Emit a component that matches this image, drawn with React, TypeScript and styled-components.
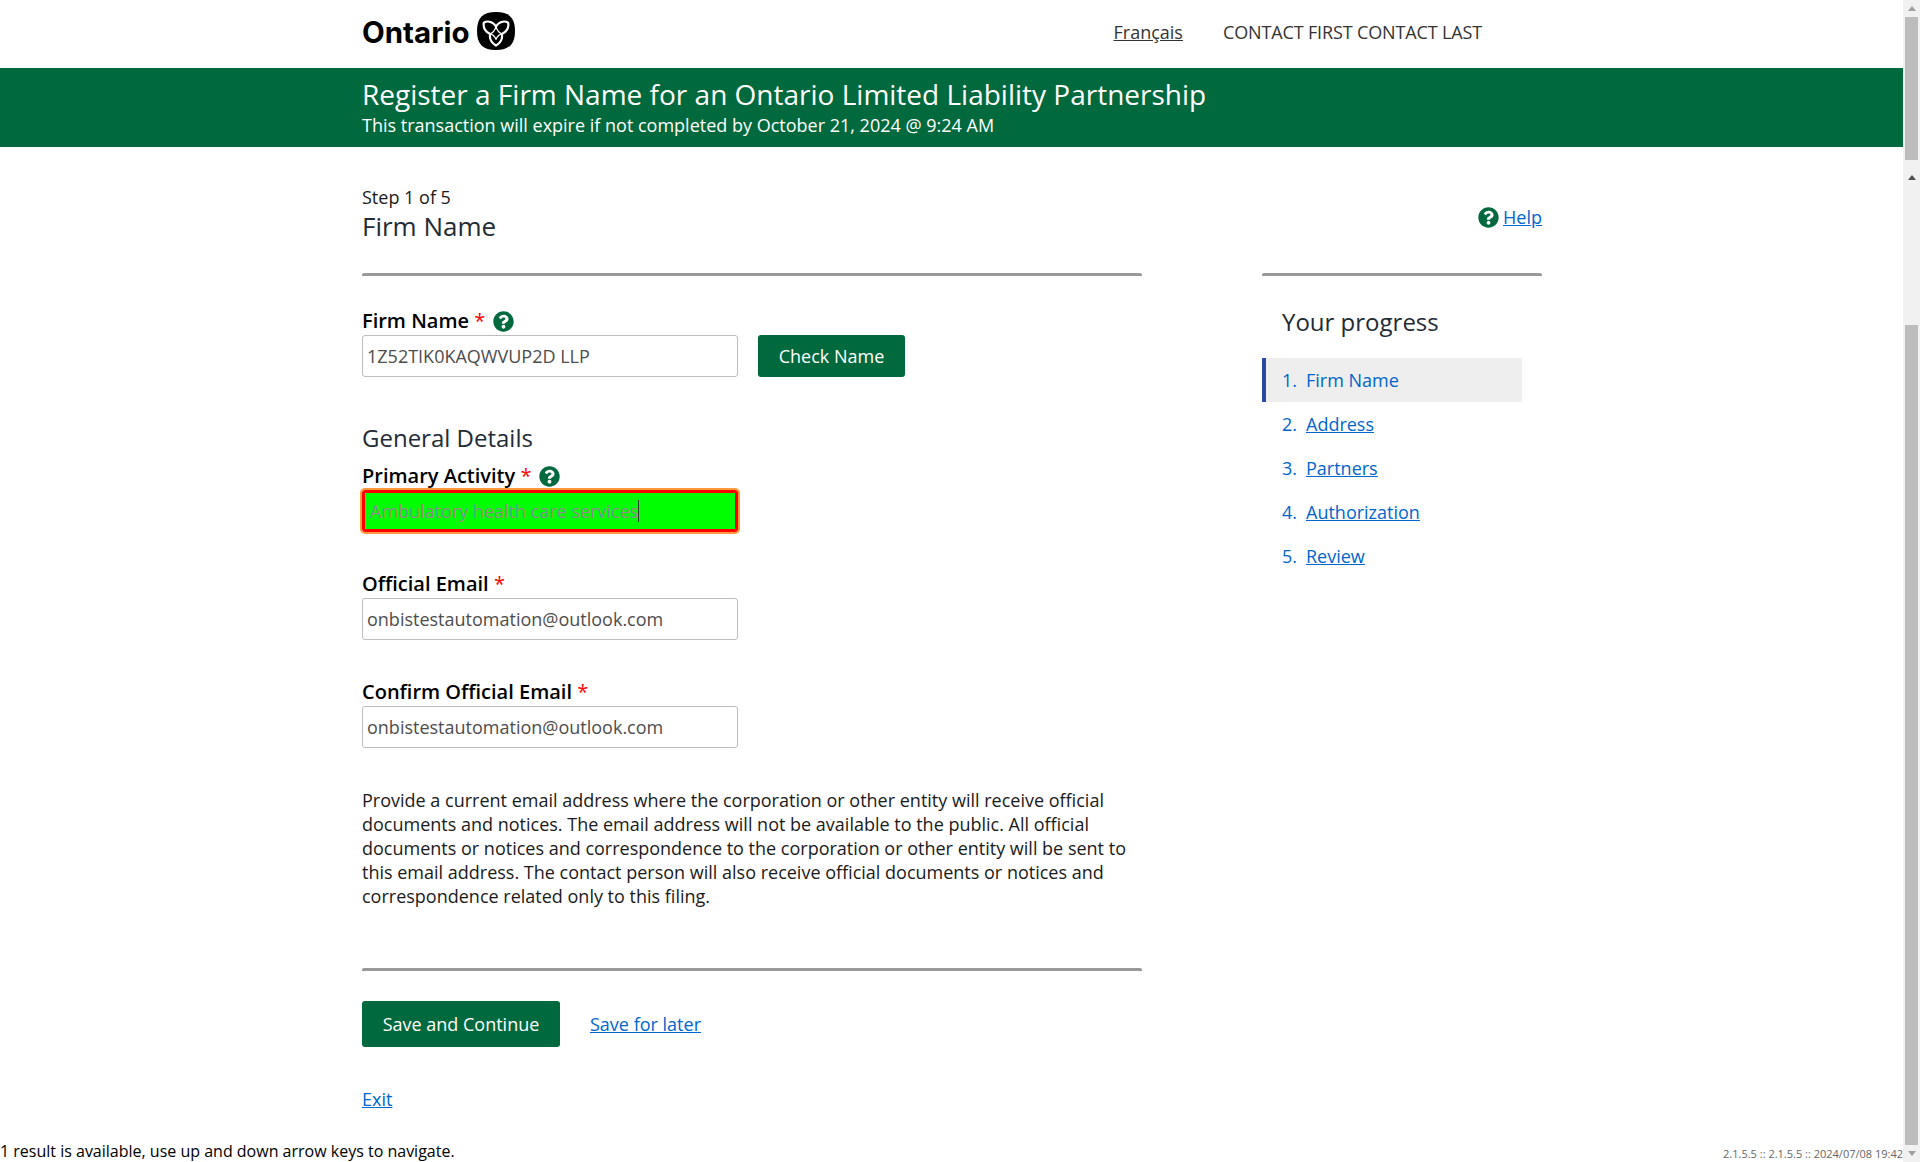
import React from 'react';
import styled, { createGlobalStyle } from 'styled-components';
import { FaQuestionCircle } from 'react-icons/fa';

const GREEN = '#00693e';
const LINK = '#0066cc';

const GlobalStyle = createGlobalStyle`
  html, body {
    margin: 0;
    padding: 0;
    height: 100%;
    overflow: hidden;
    background: #fff;
  }
  body {
    font-family: "Open Sans", "Liberation Sans", sans-serif;
    font-size: 18px;
    line-height: 24px;
    color: #1a1a1a;
  }
  * {
    box-sizing: border-box;
  }
`;

const steps = ['Firm Name', 'Address', 'Partners', 'Authorization', 'Review'];

const TrilliumLogo = () => (
  <LogoMark viewBox="0 0 39 39" aria-hidden="true">
    <path d="M19.5 0C33 0 39 6 39 19.500 39 33 33 39 19.500 39 6 39 0 33 0 19.500 0 6 6 0 19.500 0z" fill="#000" />
    <g fill="none" stroke="#fff" strokeLinejoin="round" strokeLinecap="round">
      <path
        strokeWidth="2.2"
        d="M7 11c4-2.500 10-1 12.500 4 2.500-5 8.500-6.500 12.500-4 1 5-2 10-6.500 11.500 1 4.500-1.500 9-6 12-4.500-3-7-7.500-6-12C9 21 6 16 7 11z"
      />
      <path strokeWidth="1.4" d="M13.500 22.500c2.500-1 4.500-2.500 6-7.500 1.500 5 3.500 6.500 6 7.500" />
      <path strokeWidth="1.4" d="M13.500 22.500c2.500.5 4.500 2.500 6 5.500 1.500-3 3.500-5 6-5.500" />
    </g>
  </LogoMark>
);

const HelpIcon = () => (
  <HelpGlyph>
    <FaQuestionCircle />
  </HelpGlyph>
);

const Field = ({ label, value, help }: { label: string; value: string; help?: boolean }) => (
  <FieldGroup>
    <FieldLabel>
      {label} <Required>*</Required>
      {help && <HelpIcon />}
    </FieldLabel>
    <TextInput readOnly value={value} />
  </FieldGroup>
);

export default function App() {
  return (
    <Viewport>
      <GlobalStyle />
      <Page>
        <Header>
          <HeaderInner>
            <Logo>
              <LogoWord>Ontario</LogoWord>
              <TrilliumLogo />
            </Logo>
            <HeaderNav>
              <HeaderLink href="#">Français</HeaderLink>
              <UserName>CONTACT FIRST CONTACT LAST</UserName>
            </HeaderNav>
          </HeaderInner>
        </Header>

        <Banner>
          <BannerTitle>Register a Firm Name for an Ontario Limited Liability Partnership</BannerTitle>
          <BannerNote>This transaction will expire if not completed by October 21, 2024 @ 9:24 AM</BannerNote>
        </Banner>

        <Content>
          <MainColumn>
            <StepText>Step 1 of 5</StepText>
            <StepTitle>Firm Name</StepTitle>
            <Rule />

            <FirmSection>
              <FieldLabel>
                Firm Name <Required>*</Required>
                <HelpIcon />
              </FieldLabel>
              <InputRow>
                <TextInput readOnly value="1Z52TIK0KAQWVUP2D LLP" />
                <PrimaryButton $small>Check Name</PrimaryButton>
              </InputRow>
            </FirmSection>

            <SectionTitle>General Details</SectionTitle>

            <FieldLabel>
              Primary Activity <Required>*</Required>
              <HelpIcon />
            </FieldLabel>
            <ActiveField>
              Ambulatory health care services
              <Caret />
            </ActiveField>

            <Field label="Official Email" value="onbistestautomation@outlook.com" />
            <Field label="Confirm Official Email" value="onbistestautomation@outlook.com" />

            <Notice>
              Provide a current email address where the corporation or other entity will receive official documents and
              notices. The email address will not be available to the public. All official documents or notices and
              correspondence to the corporation or other entity will be sent to this email address. The contact person
              will also receive official documents or notices and correspondence related only to this filing.
            </Notice>

            <Rule />

            <Actions>
              <PrimaryButton>Save and Continue</PrimaryButton>
              <TextLink href="#">Save for later</TextLink>
            </Actions>
            <ExitRow>
              <TextLink href="#">Exit</TextLink>
            </ExitRow>
          </MainColumn>

          <SideColumn>
            <HelpRow>
              <HelpIcon />
              <TextLink href="#">Help</TextLink>
            </HelpRow>
            <Rule />
            <ProgressTitle>Your progress</ProgressTitle>
            <ProgressList>
              {steps.map((step, index) => (
                <ProgressItem key={step} $active={index === 0}>
                  <ProgressNumber>{index + 1}.</ProgressNumber>
                  {index === 0 ? step : <TextLink href="#">{step}</TextLink>}
                </ProgressItem>
              ))}
            </ProgressList>
          </SideColumn>
        </Content>

        <Footer>
          <StatusText>1 result is available, use up and down arrow keys to navigate.</StatusText>
          <VersionText>2.1.5.5 :: 2.1.5.5 :: 2024/07/08 19:42</VersionText>
        </Footer>
      </Page>

      <ScrollTrack>
        <ArrowUp $dim />
        <OuterThumb />
        <ArrowUp $offset />
        <TrackGap />
        <InnerThumb />
        <ArrowDown />
      </ScrollTrack>
    </Viewport>
  );
}

const Viewport = styled.div`
  display: flex;
  width: 100%;
  height: 1162px;
  overflow: hidden;
`;

const Page = styled.div`
  flex: 1;
  min-width: 0;
  display: flex;
  flex-direction: column;
`;

const Header = styled.header`
  height: 68px;
  padding-left: 362px;
`;

const HeaderInner = styled.div`
  width: 1120px;
  height: 100%;
  display: flex;
  align-items: center;
  justify-content: space-between;
`;

const Logo = styled.div`
  display: flex;
  align-items: center;
  gap: 7px;
  margin-top: -7px;
`;

const LogoWord = styled.span`
  margin-top: 4px;
  font-family: Inter, "Liberation Sans", sans-serif;
  font-size: 29.5px;
  font-weight: 700;
  line-height: 39px;
  color: #000;
`;

const LogoMark = styled.svg`
  display: block;
  width: 38px;
  height: 38px;
`;

const HeaderNav = styled.nav`
  display: flex;
  align-items: center;
  gap: 40px;
  margin-top: -4px;
`;

const HeaderLink = styled.a`
  color: #333;
  text-decoration: underline;
`;

const UserName = styled.span`
  letter-spacing: -0.14px;
  color: #333;
`;

const Banner = styled.div`
  height: 79px;
  padding: 7px 0 0 362px;
  background: ${GREEN};
  color: #fff;
`;

const BannerTitle = styled.h1`
  margin: 0;
  font-size: 28px;
  font-weight: 400;
  line-height: 38px;
`;

const BannerNote = styled.p`
  margin: 0;
  font-size: 18px;
  line-height: 24px;
`;

const Content = styled.main`
  flex: 1;
  display: flex;
  gap: 120px;
  padding: 38px 0 0 362px;
`;

const MainColumn = styled.div`
  width: 780px;
`;

const StepText = styled.div`
  height: 24px;
`;

const StepTitle = styled.h2`
  margin: 0 0 30px;
  font-size: 26px;
  font-weight: 400;
  line-height: 34px;
  color: #222b36;
`;

const Rule = styled.hr`
  height: 3px;
  margin: 0;
  border: 0;
  border-radius: 2px 2px 0 0;
  background: #999;
`;

const FirmSection = styled.section`
  margin-top: 30px;
`;

const FieldLabel = styled.label`
  display: flex;
  align-items: center;
  height: 28px;
  padding-top: 2px;
  margin-bottom: 1px;
  font-size: 20px;
  font-weight: 600;
  color: #000;
  white-space: pre;
`;

const Required = styled.span`
  color: #f00;
  font-weight: 400;
`;

const HelpGlyph = styled.span`
  display: inline-flex;
  margin-left: 8px;
  color: ${GREEN};
  font-size: 21px;
`;

const InputRow = styled.div`
  display: flex;
  gap: 20px;
`;

const TextInput = styled.input`
  display: block;
  width: 376px;
  height: 42px;
  padding: 0 4px;
  border: 1px solid #bdbdbd;
  border-radius: 3px;
  background: #fff;
  font-family: inherit;
  font-size: 18px;
  color: #4d4d4d;
  outline: none;
`;

const PrimaryButton = styled.button<{ $small?: boolean }>`
  width: ${(p) => (p.$small ? '147px' : '198px')};
  height: ${(p) => (p.$small ? '42px' : '46px')};
  padding: 0;
  border: 0;
  border-radius: 3px;
  background: ${GREEN};
  font-family: inherit;
  font-size: 18px;
  color: #fff;
`;

const SectionTitle = styled.h3`
  margin: 45px 0 7px;
  font-size: 24px;
  font-weight: 400;
  line-height: 32px;
  color: #222b36;
`;

const ActiveField = styled.div`
  display: flex;
  align-items: center;
  width: 376px;
  height: 42px;
  padding-left: 5px;
  border: 3px solid #f00;
  border-radius: 3px;
  outline: 2px solid #ff9a3c;
  background: #0f0;
  font-size: 18px;
  color: #8c8c8c;
`;

const Caret = styled.span`
  width: 1px;
  height: 22px;
  background: #333;
`;

const FieldGroup = styled.div`
  margin-top: 37px;
`;

const Notice = styled.p`
  margin: 40px 0 60px;
  color: #1a1a1a;
`;

const Actions = styled.div`
  display: flex;
  align-items: center;
  gap: 30px;
  margin-top: 30px;
`;

const TextLink = styled.a`
  color: ${LINK};
  text-decoration: underline;
`;

const ExitRow = styled.div`
  margin-top: 40px;
`;

const SideColumn = styled.aside`
  width: 280px;
`;

const HelpRow = styled.div`
  display: flex;
  justify-content: flex-end;
  align-items: center;
  height: 24px;
  margin: 20px 0 44px;
  gap: 4px;
  ${HelpGlyph} {
    margin-left: 0;
  }
`;

const ProgressTitle = styled.h2`
  margin: 30px 0 20px 20px;
  font-size: 24px;
  font-weight: 400;
  line-height: 32px;
  color: #222b36;
`;

const ProgressList = styled.ol`
  margin: 0;
  padding: 0;
  list-style: none;
`;

const ProgressItem = styled.li<{ $active?: boolean }>`
  display: flex;
  align-items: center;
  width: 260px;
  height: 44px;
  padding-left: ${(p) => (p.$active ? '16px' : '20px')};
  border-left: ${(p) => (p.$active ? '4px solid #2b47a8' : '0')};
  background: ${(p) => (p.$active ? '#eee' : 'transparent')};
  color: ${LINK};
`;

const ProgressNumber = styled.span`
  width: 24px;
`;

const Footer = styled.footer`
  display: flex;
  align-items: flex-end;
  justify-content: space-between;
  height: 24px;
`;

const StatusText = styled.span`
  font-size: 16px;
  line-height: 22px;
  color: #000;
`;

const VersionText = styled.span`
  font-size: 11px;
  line-height: 16px;
  color: #666;
`;

const ScrollTrack = styled.div`
  flex: none;
  display: flex;
  flex-direction: column;
  align-items: center;
  width: 17px;
  height: 100%;
  background: #f1f1f1;
`;

const ArrowUp = styled.span<{ $dim?: boolean; $offset?: boolean }>`
  flex: none;
  width: 0;
  height: 0;
  margin: ${(p) => (p.$offset ? '15px 0 0' : '6px 0')};
  border-left: 4px solid transparent;
  border-right: 4px solid transparent;
  border-bottom: 5px solid ${(p) => (p.$dim ? '#a0a0a0' : '#505050')};
`;

const ArrowDown = styled.span`
  flex: none;
  width: 0;
  height: 0;
  margin: 6px 0;
  border-left: 4px solid transparent;
  border-right: 4px solid transparent;
  border-top: 5px solid #a0a0a0;
`;

const OuterThumb = styled.div`
  flex: none;
  width: 13px;
  height: 143px;
  background: #bcbcbc;
`;

const TrackGap = styled.div`
  flex: none;
  height: 145px;
`;

const InnerThumb = styled.div`
  flex: none;
  width: 13px;
  height: 820px;
  background: #bcbcbc;
`;
